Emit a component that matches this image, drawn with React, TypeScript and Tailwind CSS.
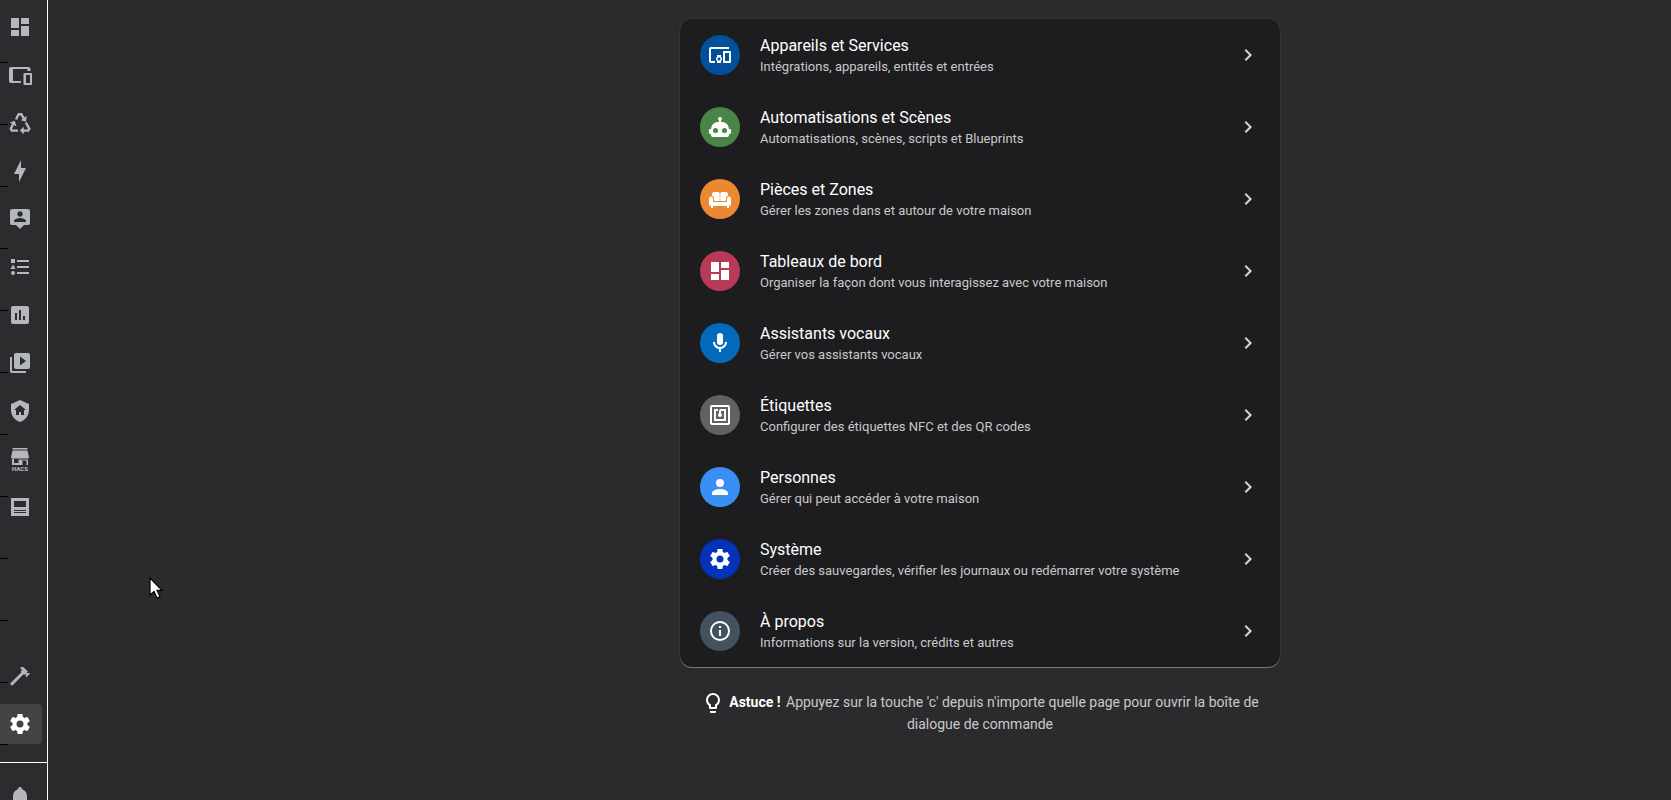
import type { ReactNode } from 'react';
import clsx from 'clsx';

const PATHS = {
    dashboard: 'M13,3V9H21V3M13,21H21V11H13M3,21H11V15H3M3,13H11V3H3V13Z',
    tablet: 'M22.5,8H19.5V6H5V18H13V20H3A2,2 0 0,1 1,18V6A2,2 0 0,1 3,4H20.5A2,2 0 0,1 22.5,6V8M16.5,10H23A1,1 0 0,1 24,11V21A1,1 0 0,1 23,22H16.5A1,1 0 0,1 15.5,21V11A1,1 0 0,1 16.5,10M18,12V20H22V12H18Z',
    energy: 'M11 15H6L13 1V9H18L11 23V15Z',
    map: 'M20,2H4A2,2 0 0,0 2,4V16A2,2 0 0,0 4,18H8L12,22L16,18H20A2,2 0 0,0 22,16V4A2,2 0 0,0 20,2M12,4.3C13.5,4.3 14.7,5.5 14.7,7C14.7,8.5 13.5,9.7 12,9.7C10.5,9.7 9.3,8.5 9.3,7C9.3,5.5 10.5,4.3 12,4.3M18,15H6V14.1C6,12.1 10,11 12,11C14,11 18,12.1 18,14.1V15Z',
    logbook: 'M5,9.5L7.5,14H2.5L5,9.5M3,4H7V8H3V4M5,20A2,2 0 0,0 7,18A2,2 0 0,0 5,16A2,2 0 0,0 3,18A2,2 0 0,0 5,20M9,5V7H21V5H9M9,19H21V17H9V19M9,13H21V11H9V13Z',
    history: 'M9,17H7V10H9V17M13,17H11V7H13V17M17,17H15V13H17V17M19,3H5C3.9,3 3,3.9 3,5V19C3,20.1 3.9,21 5,21H19C20.1,21 21,20.1 21,19V5C21,3.9 20.1,3 19,3Z',
    media: 'M4,6H2V20A2,2 0 0,0 4,22H18V20H4V6M20,2H8A2,2 0 0,0 6,4V16A2,2 0 0,0 8,18H20A2,2 0 0,0 22,16V4A2,2 0 0,0 20,2M12,14.5V5.5L18,10L12,14.5Z',
    shieldHome: 'M11,13H13V16H16V11H18L12,6L6,11H8V16H11V13M12,1L21,5V11C21,16.55 17.16,21.74 12,23C6.84,21.74 3,16.55 3,11V5L12,1Z',
    post: 'M3,3H21V21H3V3M6,6V12H18V6H6M6,15V16H18V15H6M6,17V18H18V17H6Z',
    hammer: 'M2,19.63L13.43,8.2L12.72,7.5L14.14,6.07L12,3.89C13.2,2.7 15.09,2.7 16.27,3.89L19.87,7.5L18.45,8.91H21.29L22,9.62L18.45,13.21L17.74,12.5V9.62L16.27,11.04L15.56,10.33L4.13,21.76L2,19.63Z',
    bell: 'M21,19V20H3V19L5,17V11C5,7.9 7.03,5.17 10,4.29C10,4.19 10,4.1 10,4A2,2 0 0,1 12,2A2,2 0 0,1 14,4C14,4.1 14,4.19 14,4.29C16.97,5.17 19,7.9 19,11V17L21,19M14,21A2,2 0 0,1 12,23A2,2 0 0,1 10,21',
    devices: 'M3 6H21V4H3C1.9 4 1 4.9 1 6V18C1 19.1 1.9 20 3 20H7V18H3V6M13 12H9V13.78C8.39 14.33 8 15.11 8 16C8 16.89 8.39 17.67 9 18.22V20H13V18.22C13.61 17.67 14 16.88 14 16S13.61 14.33 13 13.78V12M11 17.5C10.17 17.5 9.5 16.83 9.5 16S10.17 14.5 11 14.5 12.5 15.17 12.5 16 11.83 17.5 11 17.5M22 8H16C15.5 8 15 8.5 15 9V19C15 19.5 15.5 20 16 20H22C22.5 20 23 19.5 23 19V9C23 8.5 22.5 8 22 8M21 18H17V10H21V18Z',
    robot: 'M12,2A2,2 0 0,1 14,4C14,4.74 13.6,5.39 13,5.73V7H14A7,7 0 0,1 21,14H22A1,1 0 0,1 23,15V18A1,1 0 0,1 22,19H21V20A2,2 0 0,1 19,22H5A2,2 0 0,1 3,20V19H2A1,1 0 0,1 1,18V15A1,1 0 0,1 2,14H3A7,7 0 0,1 10,7H11V5.73C10.4,5.39 10,4.74 10,4A2,2 0 0,1 12,2M7.5,13A2.5,2.5 0 0,0 5,15.5A2.5,2.5 0 0,0 7.5,18A2.5,2.5 0 0,0 10,15.5A2.5,2.5 0 0,0 7.5,13M16.5,13A2.5,2.5 0 0,0 14,15.5A2.5,2.5 0 0,0 16.5,18A2.5,2.5 0 0,0 19,15.5A2.5,2.5 0 0,0 16.5,13Z',
    sofa: 'M6,5H10A1.7,1.7 0 0,1 11.7,6.7V14H6V10.5A3,3 0 0,0 4,8.7V7A2,2 0 0,1 6,5M14,5H18A2,2 0 0,1 20,7V8.7A3,3 0 0,0 18,10.5V14H12.3V6.7A1.7,1.7 0 0,1 14,5M3,9.5A2,2 0 0,1 5,11.5V15H19V11.5A2,2 0 0,1 23,11.5V17A2,2 0 0,1 21,19V21H19V19H5V21H3V19A2,2 0 0,1 1,17V11.5A2,2 0 0,1 3,9.5Z',
    mic: 'M12,2A3,3 0 0,1 15,5V11A3,3 0 0,1 12,14A3,3 0 0,1 9,11V5A3,3 0 0,1 12,2M19,11C19,14.53 16.39,17.44 13,17.93V21H11V17.93C7.61,17.44 5,14.53 5,11H7A5,5 0 0,0 12,16A5,5 0 0,0 17,11H19Z',
    nfc: 'M18,6H13A2,2 0 0,0 11,8V10.28C10.41,10.62 10,11.26 10,12A2,2 0 0,0 12,14C13.11,14 14,13.1 14,12C14,11.26 13.6,10.62 13,10.28V8H16V16H8V8H10V6H8L6,6V18H18M20,20H4V4H20M20,2H4A2,2 0 0,0 2,4V20A2,2 0 0,0 4,22H20C21.11,22 22,21.1 22,20V4C22,2.89 21.11,2 20,2Z',
    account: 'M12,4A4,4 0 0,1 16,8A4,4 0 0,1 12,12A4,4 0 0,1 8,8A4,4 0 0,1 12,4M12,14C16.42,14 20,15.79 20,18V20H4V18C4,15.79 7.58,14 12,14Z',
    cog: 'M12,15.5A3.5,3.5 0 0,1 8.5,12A3.5,3.5 0 0,1 12,8.5A3.5,3.5 0 0,1 15.5,12A3.5,3.5 0 0,1 12,15.5M19.43,12.97C19.47,12.65 19.5,12.33 19.5,12C19.5,11.67 19.47,11.34 19.43,11L21.54,9.37C21.73,9.22 21.78,8.95 21.66,8.73L19.66,5.27C19.54,5.05 19.27,4.96 19.05,5.05L16.56,6.05C16.04,5.66 15.5,5.32 14.87,5.07L14.5,2.42C14.46,2.18 14.25,2 14,2H10C9.75,2 9.54,2.18 9.5,2.42L9.13,5.07C8.5,5.32 7.96,5.66 7.44,6.05L4.95,5.05C4.73,4.96 4.46,5.05 4.34,5.27L2.34,8.73C2.21,8.95 2.27,9.22 2.46,9.37L4.57,11C4.53,11.34 4.5,11.67 4.5,12C4.5,12.33 4.53,12.65 4.57,12.97L2.46,14.63C2.27,14.78 2.21,15.05 2.34,15.27L4.34,18.73C4.46,18.95 4.73,19.03 4.95,18.95L7.44,17.94C7.96,18.34 8.5,18.68 9.13,18.93L9.5,21.58C9.54,21.82 9.75,22 10,22H14C14.25,22 14.46,21.82 14.5,21.58L14.87,18.93C15.5,18.67 16.04,18.34 16.56,17.94L19.05,18.95C19.27,19.03 19.54,18.95 19.66,18.73L21.66,15.27C21.78,15.05 21.73,14.78 21.54,14.63L19.43,12.97Z',
    info: 'M11,9H13V7H11M12,20C7.59,20 4,16.41 4,12C4,7.59 7.59,4 12,4C16.41,4 20,7.59 20,12C20,16.41 16.41,20 12,20M12,2A10,10 0 0,0 2,12A10,10 0 0,0 12,22A10,10 0 0,0 22,12A10,10 0 0,0 12,2M11,17H13V11H11V17Z',
    chevron: 'M8.59,16.58L13.17,12L8.59,7.41L10,6L16,12L10,18L8.59,16.58Z',
    bulb: 'M12,2A7,7 0 0,1 19,9C19,11.38 17.81,13.47 16,14.74V17A1,1 0 0,1 15,18H9A1,1 0 0,1 8,17V14.74C6.19,13.47 5,11.38 5,9A7,7 0 0,1 12,2M9,21V20H15V21A1,1 0 0,1 14,22H10A1,1 0 0,1 9,21M12,4A5,5 0 0,0 7,9C7,11.05 8.23,12.81 10,13.58V16H14V13.58C15.77,12.81 17,11.05 17,9A5,5 0 0,0 12,4Z',
};

type IconName = keyof typeof PATHS;

function Icon({ name, className }: { name: IconName; className?: string }) {
    return (
        <svg viewBox="0 0 24 24" fill="currentColor" fillRule="evenodd" className={clsx('size-6 shrink-0', className)} aria-hidden="true">
            <path d={PATHS[name]} />
        </svg>
    );
}

function RecycleIcon() {
    return (
        <svg viewBox="0 0 24 24" className="size-6 shrink-0" fill="none" stroke="currentColor" strokeWidth="2.4" aria-hidden="true">
            <path d="M8,8.5L10.6,3.3H13.4L15.8,7.5M5.2,13L2.8,17.8L3.8,19.6H10M17.8,11.5L21.3,17.8L20.2,19.6H15" />
            <path d="M18.7,4.8L18,10.7L12.8,9.2ZM1.8,11.6L6.8,9.8L8.4,15.4ZM11.8,19.6L15.8,15.8V23.2Z" fill="currentColor" stroke="none" />
        </svg>
    );
}

function HacsIcon() {
    return (
        <svg viewBox="0 0 24 24" className="size-6 shrink-0" fill="currentColor" aria-hidden="true">
            <path d="M4.5,1H19.5V2.5H4.5ZM4.5,3.5H19.5L21,10.5A1,1 0 0,1 20,11.5H4A1,1 0 0,1 3,10.5Z" />
            <path d="M4,12H6V16H10.5V12.5H14.5V18H4ZM18,12.5H20V18H18.5V13.5H15V12.5Z" />
            <text x="12" y="24" textAnchor="middle" fontSize="6" fontWeight="900" fontFamily="Roboto, sans-serif">HACS</text>
        </svg>
    );
}

const MAIN_NAV: { label: string; icon: ReactNode }[] = [
    { label: 'Aperçu', icon: <Icon name="dashboard" /> },
    { label: 'Tablette', icon: <Icon name="tablet" /> },
    { label: 'Recyclage', icon: <RecycleIcon /> },
    { label: 'Énergie', icon: <Icon name="energy" /> },
    { label: 'Carte', icon: <Icon name="map" /> },
    { label: 'Journal', icon: <Icon name="logbook" /> },
    { label: 'Historique', icon: <Icon name="history" /> },
    { label: 'Médias', icon: <Icon name="media" /> },
    { label: 'Sécurité', icon: <Icon name="shieldHome" /> },
    { label: 'HACS', icon: <HacsIcon /> },
    { label: 'Actualités', icon: <Icon name="post" /> },
];

const SETTINGS: { title: string; text: string; icon: IconName; color: string }[] = [
    { title: 'Appareils et Services', text: 'Intégrations, appareils, entités et entrées', icon: 'devices', color: 'bg-[#02509a]' },
    { title: 'Automatisations et Scènes', text: 'Automatisations, scènes, scripts et Blueprints', icon: 'robot', color: 'bg-[#4a8548]' },
    { title: 'Pièces et Zones', text: 'Gérer les zones dans et autour de votre maison', icon: 'sofa', color: 'bg-[#ec8732]' },
    { title: 'Tableaux de bord', text: 'Organiser la façon dont vous interagissez avec votre maison', icon: 'dashboard', color: 'bg-[#b73a56]' },
    { title: 'Assistants vocaux', text: 'Gérer vos assistants vocaux', icon: 'mic', color: 'bg-[#026bbb]' },
    { title: 'Étiquettes', text: 'Configurer des étiquettes NFC et des QR codes', icon: 'nfc', color: 'bg-[#616161]' },
    { title: 'Personnes', text: 'Gérer qui peut accéder à votre maison', icon: 'account', color: 'bg-[#388ff5]' },
    { title: 'Système', text: 'Créer des sauvegardes, vérifier les journaux ou redémarrer votre système', icon: 'cog', color: 'bg-[#0432b8]' },
    { title: 'À propos', text: 'Informations sur la version, crédits et autres', icon: 'info', color: 'bg-[#435261]' },
];

function NavItem({ label, active, children }: { label: string; active?: boolean; children: ReactNode }) {
    return (
        <a
            href="#"
            aria-label={label}
            className={clsx('flex h-10 items-center rounded-r pl-2', active ? 'bg-[#434343] text-white' : 'text-[#b4b7be]')}
        >
            {children}
        </a>
    );
}

function Sidebar() {
    return (
        <aside className="relative h-screen w-12 shrink-0 overflow-hidden border-r border-white bg-[#2c2c2e]">
            {/* Ruler marks on the left edge */}
            <div className="absolute top-px left-0 w-2" aria-hidden="true">
                {Array.from({ length: 12 }, (_, i) => (
                    <div key={i} className="h-[62px] border-b border-black" />
                ))}
            </div>

            <div className="relative flex h-full flex-col">
                <nav className="flex flex-1 flex-col gap-2 pt-[7px] pr-[5px]">
                    {MAIN_NAV.map(item => (
                        <NavItem key={item.label} label={item.label}>{item.icon}</NavItem>
                    ))}
                </nav>
                <nav className="flex flex-col gap-2 pr-[5px] pb-[18px]">
                    <NavItem label="Outils de développement"><Icon name="hammer" /></NavItem>
                    <NavItem label="Paramètres" active><Icon name="cog" /></NavItem>
                </nav>
                <div className="-mb-[17px] border-t border-white pt-[14px]">
                    <NavItem label="Notifications"><Icon name="bell" /></NavItem>
                </div>
            </div>
        </aside>
    );
}

export default function App() {
    return (
        <div className="relative flex h-screen overflow-hidden bg-[#2b2b2d] font-[Roboto,sans-serif]">
            <Sidebar />

            <main className="flex flex-1 flex-col items-center pt-[19px] pl-[241px]">
                <ul className="w-full max-w-[600px] rounded-xl bg-[#1d1d1f] shadow-[0_1px_0_0_#7a7a7c,0_0_0_1px_#343436]">
                    {SETTINGS.map(item => (
                        <li key={item.title}>
                            <a href="#" className="flex h-[72px] items-center gap-5 px-5">
                                <span className={clsx('flex size-10 shrink-0 items-center justify-center rounded-full text-white', item.color)}>
                                    <Icon name={item.icon} />
                                </span>
                                <span className="flex-1 pt-0.5">
                                    <span className="block text-base leading-[22px] text-white">{item.title}</span>
                                    <span className="block text-[13px] leading-5 text-[#c9c9ca]">{item.text}</span>
                                </span>
                                <Icon name="chevron" className="text-[#d6d6d7]" />
                            </a>
                        </li>
                    ))}
                </ul>

                <p className="mt-6 w-full max-w-[600px] px-5 text-center text-sm leading-[22px] text-[#c9c9ca]">
                    <Icon name="bulb" className="-my-1 inline text-white" />
                    <b className="mr-0.5 ml-1 font-bold text-white">Astuce !</b>
                    {' '}Appuyez sur la touche 'c' depuis n'importe quelle page pour ouvrir la boîte de dialogue de commande
                </p>
            </main>

            {/* Mouse pointer */}
            <svg viewBox="0 0 14 22" className="absolute top-[577px] left-[149px] h-[22px] w-[14px]" aria-hidden="true">
                <path d="M1,1V18L5,14.5L8,21L11,19.6L8,13.3H13Z" fill="#fff" stroke="#000" strokeWidth="1.2" />
            </svg>
        </div>
    );
}
